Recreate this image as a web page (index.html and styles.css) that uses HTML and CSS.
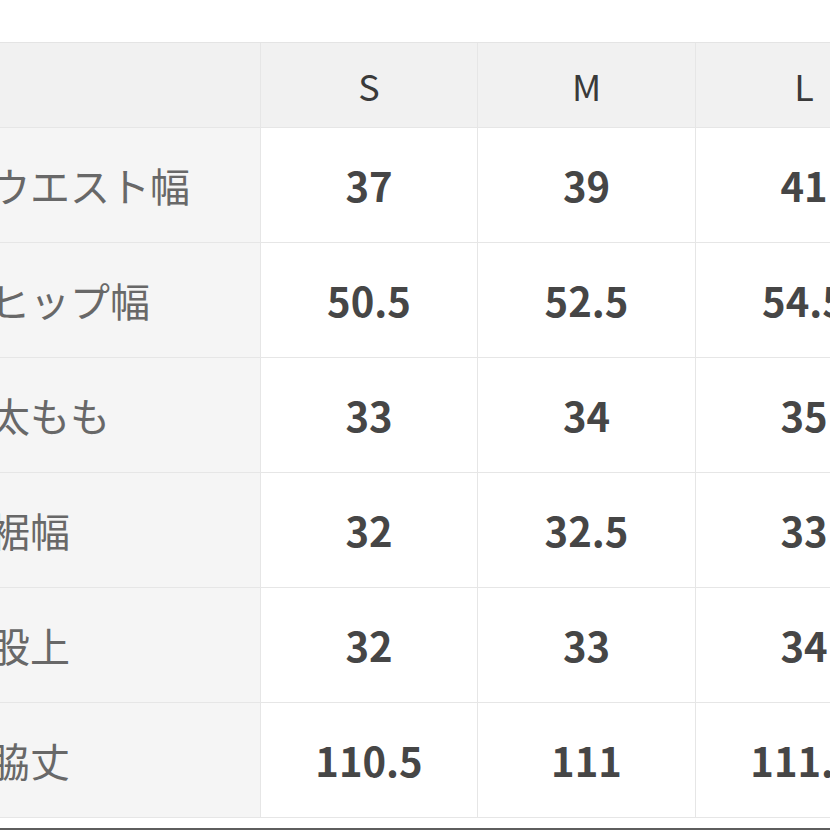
FILE: index.html
```html
<!DOCTYPE html>
<html lang="ja">
<head>
<meta charset="utf-8">
<link rel="stylesheet" href="styles.css">
</head>
<body>
<div class="page">
  <div class="size-table">
    <div class="cell head label"></div>
    <div class="cell head">S</div>
    <div class="cell head">M</div>
    <div class="cell head">L</div>

    <div class="cell label">ウエスト幅</div>
    <div class="cell num">37</div>
    <div class="cell num">39</div>
    <div class="cell num">41</div>

    <div class="cell label">ヒップ幅</div>
    <div class="cell num">50.5</div>
    <div class="cell num">52.5</div>
    <div class="cell num">54.5</div>

    <div class="cell label">太もも</div>
    <div class="cell num">33</div>
    <div class="cell num">34</div>
    <div class="cell num">35</div>

    <div class="cell label">裾幅</div>
    <div class="cell num">32</div>
    <div class="cell num">32.5</div>
    <div class="cell num">33</div>

    <div class="cell label">股上</div>
    <div class="cell num">32</div>
    <div class="cell num">33</div>
    <div class="cell num">34</div>

    <div class="cell label">脇丈</div>
    <div class="cell num">110.5</div>
    <div class="cell num">111</div>
    <div class="cell num">111.5</div>
  </div>
  <div class="bottom-line"></div>
</div>
</body>
</html>
```

FILE: styles.css
```css
html, body {
  margin: 0;
  padding: 0;
  background: #ffffff;
  overflow: hidden;
}

.page {
  width: 830px;
  height: 830px;
  padding-top: 42px;
  box-sizing: border-box;
  overflow: hidden;
}

.size-table {
  display: grid;
  grid-template-columns: 292px 217px 218px 217px;
  grid-template-rows: 85px repeat(6, 115px);
  width: 944px;
  margin-left: -31px;
  border-top: 1px solid #e4e4e4;
  font-family: "Noto Sans CJK JP", "Noto Sans", sans-serif;
}

.cell {
  display: flex;
  align-items: center;
  justify-content: center;
  border-right: 1px solid #e6e6e6;
  border-bottom: 1px solid #e6e6e6;
  background: #ffffff;
  color: #444444;
}

.head {
  background: #f1f1f1;
  font-size: 36px;
  font-weight: 400;
  color: #3a3a3a;
}

.label {
  justify-content: flex-start;
  padding-left: 21px;
  background: #f5f5f5;
  font-size: 40px;
  color: #686868;
}

.head.label {
  background: #f1f1f1;
}

.num {
  font-size: 40px;
  font-weight: 700;
  color: #464646;
}

.bottom-line {
  margin-top: 10px;
  height: 2px;
  background: #5e5e5e;
}
```
